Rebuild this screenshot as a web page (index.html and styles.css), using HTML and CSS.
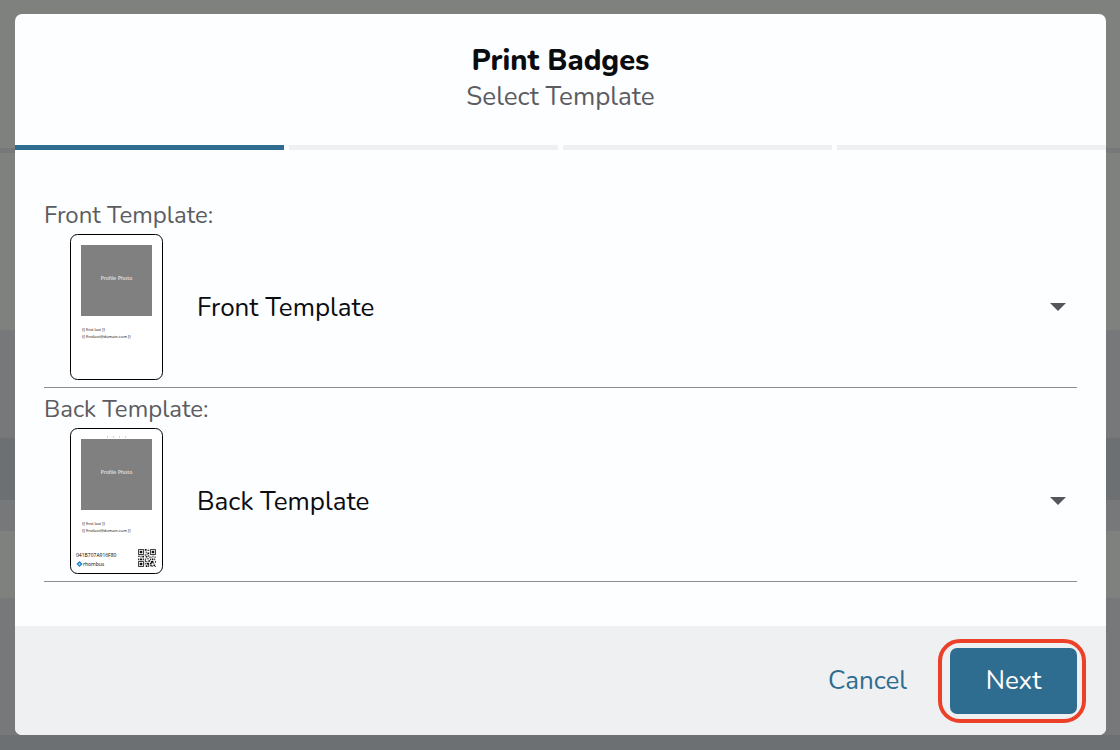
FILE: index.html
```
<!DOCTYPE html>
<html lang="en">
<head>
<meta charset="utf-8">
<meta name="viewport" content="width=device-width, initial-scale=1">
<title>Print Badges</title>
<link rel="stylesheet" href="styles.css">
</head>
<body class="page">
<form class="dialog" role="dialog" aria-labelledby="dialog-title">
  <header class="dialog-header">
    <h1 class="title" id="dialog-title">Print Badges</h1>
    <p class="subtitle">Select Template</p>
  </header>
  <div class="steps">
    <span class="step step-active"></span>
    <span class="step"></span>
    <span class="step"></span>
    <span class="step"></span>
  </div>
  <div class="dialog-body">
    <div class="group">
      <label class="label" for="front">Front Template:</label>
      <div class="field">
        <svg class="badge" viewBox="0 0 93 146" aria-hidden="true">
          <rect class="badge-card" x=".5" y=".5" width="92" height="145" rx="7"/>
          <rect class="badge-photo" x="11" y="11" width="71" height="71"/>
          <text class="badge-photo-text" x="46.5" y="46" text-anchor="middle">Profile Photo</text>
          <text class="badge-line" x="12" y="97">{{ first last }}</text>
          <text class="badge-line" x="12" y="104">{{ firstlast@domain.com }}</text>
        </svg>
        <select class="select" id="front"><option>Front Template</option></select>
        <svg class="caret" viewBox="0 0 16 8" aria-hidden="true"><path d="M0 0h16L8 8z"/></svg>
      </div>
    </div>
    <div class="group">
      <label class="label" for="back">Back Template:</label>
      <div class="field">
        <svg class="badge" viewBox="0 0 93 146" aria-hidden="true">
          <rect class="badge-card" x=".5" y=".5" width="92" height="145" rx="7"/>
          <path class="badge-dots" d="M37 9h1M43 9h1M49 9h1M55 9h1"/>
          <rect class="badge-photo" x="11" y="11" width="71" height="71"/>
          <text class="badge-photo-text" x="46.5" y="46" text-anchor="middle">Profile Photo</text>
          <text class="badge-line" x="12" y="97">{{ first last }}</text>
          <text class="badge-line" x="12" y="104">{{ firstlast@domain.com }}</text>
          <text class="badge-number" x="6" y="129">041B707A916F80</text>
          <path class="badge-logo" d="M9.500 134l2 2-2 2-2-2z"/>
          <text class="badge-brand" x="13" y="138">rhombus</text>
          <svg x="68" y="121" width="18" height="18" viewBox="0 0 21 21">
            <path class="qr-ring" d="M.5.5h6v6h-6zM14.500.5h6v6h-6zM.5 14.500h6v6h-6z"/>
            <path class="qr-dots" d="M2 2h3v3H2zM16 2h3v3h-3zM2 16h3v3H2zM8 0h2v2H8zM11 1h2v1h-2zM9 3h1v2H9zM11 4h2v2h-2zM8 6h1v2H8zM10 6h1v1h-1zM12 7h1v2h-1zM0 8h2v1H0zM3 8h1v2H3zM5 8h2v2H5zM9 8h2v2H9zM13 9h3v1h-3zM17 8h1v2h-1zM19 9h2v1h-2zM0 11h1v2H0zM2 11h3v2H2zM6 11h1v2H6zM8 11h1v4H8zM10 11h3v1h-3zM14 11h1v2h-1zM16 11h2v2h-2zM19 11h1v2h-1zM9 14h2v1H9zM12 13h2v2h-2zM15 14h3v2h-3zM20 14h1v2h-1zM8 16h1v2H8zM10 16h3v2h-3zM14 16h2v2h-2zM17 16h2v1h-2zM9 19h2v2H9zM12 18h1v3h-1zM14 19h3v1h-3zM18 18h2v2h-2zM16 20h1v1h-1zM20 20h1v1h-1z"/>
          </svg>
        </svg>
        <select class="select" id="back"><option>Back Template</option></select>
        <svg class="caret" viewBox="0 0 16 8" aria-hidden="true"><path d="M0 0h16L8 8z"/></svg>
      </div>
    </div>
  </div>
  <footer class="dialog-footer">
    <button class="button button-text" type="button">Cancel</button>
    <span class="highlight"><button class="button button-primary" type="button">Next</button></span>
  </footer>
</form>
</body>
</html>
```
FILE: styles.css
```
* { box-sizing: border-box; }

.page {
  display: flex;
  min-height: 100vh;
  margin: 0;
  padding: 14px 14px 15px 15px;
  font-family: "Nunito", "Noto Sans", "Open Sans", sans-serif;
  background: linear-gradient(
    #7f817f 0 148px, #77787a 148px 153px, #7f817f 153px 330px,
    #77787a 330px 438px, #6c7072 438px 500px, #77787a 500px 531px,
    #7f817f 531px 598px, #77787a 598px 735px, #6c7072 735px);
}

.dialog {
  flex: 1;
  display: flex;
  flex-direction: column;
  overflow: hidden;
  border-radius: 7px;
  background: #fdfeff;
}

.dialog-header {
  padding: 29px 24px 30px;
  text-align: center;
}

.title {
  margin: 0;
  font-size: 29px;
  font-weight: 800;
  line-height: 36px;
  color: #0b0c0f;
}

.subtitle {
  margin: 0;
  font-size: 26px;
  line-height: 36px;
  color: #5b5c61;
}

.steps { display: flex; gap: 5px; }
.step { flex: 1; height: 5px; background: #eef0f2; }
.step-active { background: #2f6d90; }

.dialog-body {
  flex: 1;
  padding: 49px 29px 30px;
}

.label {
  display: block;
  font-size: 24px;
  line-height: 32px;
  color: #5b5c61;
}

.group { margin-bottom: 5px; }

.field {
  display: flex;
  align-items: center;
  position: relative;
  padding: 3px 0 7px 26px;
  border-bottom: 1px solid #8c8d91;
}

.badge { flex: none; width: 93px; height: 146px; font-family: "Open Sans", sans-serif; }
.badge-card { fill: #fff; stroke: #000; }
.badge-photo { fill: #808080; }
.badge-photo-text { font-family: "DejaVu Sans", sans-serif; font-size: 5px; fill: #fff; }
.badge-line { font-size: 4px; fill: #000; }
.badge-number { font-size: 5px; fill: #000; }
.badge-brand { font-size: 5px; fill: #000; }
.badge-dots { stroke: #aaa; stroke-width: 1; }
.badge-logo { fill: none; stroke: #1c86c7; stroke-width: 1.5; }
.qr-ring { fill: none; stroke: #111; stroke-width: 1; }
.qr-dots { fill: #111; }

.select {
  flex: 1;
  min-width: 0;
  height: 146px;
  padding: 0 40px 0 34px;
  border: 0;
  appearance: none;
  background: transparent;
  font-family: inherit;
  font-size: 26px;
  color: #0b0c0f;
}

.caret {
  position: absolute;
  right: 11px;
  width: 16px;
  height: 8px;
  fill: #55565b;
  pointer-events: none;
}

.dialog-footer {
  display: flex;
  justify-content: flex-end;
  align-items: center;
  gap: 15px;
  padding: 13px 20px 12px;
  background: #eff0f2;
}

.button {
  border: 0;
  font-family: inherit;
  font-size: 26px;
  line-height: 34px;
}

.button-text { padding: 16px; background: transparent; color: #2f6d90; }

.highlight {
  display: flex;
  padding: 5px 5px 5px 8px;
  border: 4px solid #ec4128;
  border-radius: 22px;
}

.button-primary {
  min-width: 127px;
  padding: 16px 32px;
  border-radius: 7px;
  background: #2f6d90;
  color: #fff;
}
```
